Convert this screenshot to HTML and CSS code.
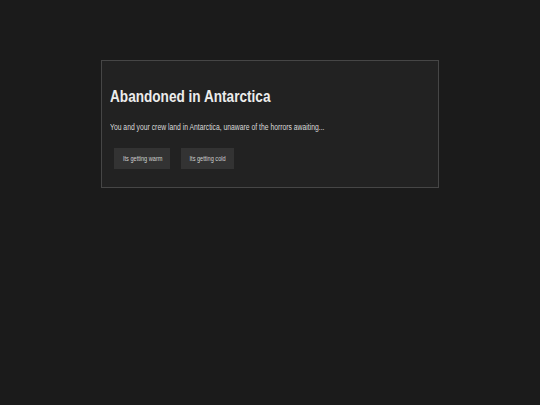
FILE: index.html
```html
<!DOCTYPE html>
<html>
<head>
<meta charset="utf-8">
<link rel="stylesheet" href="styles.css">
</head>
<body>
<div class="card">
  <h1 class="title"><span class="narrow">Abandoned in Antarctica</span></h1>
  <p class="text"><span class="narrow">You and your crew land in Antarctica, unaware of the horrors awaiting...</span></p>
  <div class="choices">
    <button class="choice"><span class="narrow-c">Its getting warm</span></button>
    <button class="choice"><span class="narrow-c">Its getting cold</span></button>
  </div>
</div>
</body>
</html>
```
FILE: styles.css
```css
html, body {
  margin: 0;
  padding: 0;
  background: #1b1b1b;
  height: 100%;
}
body {
  font-family: "Liberation Sans", Arial, sans-serif;
  color: #e6e6e6;
}
.narrow {
  display: inline-block;
  white-space: nowrap;
  transform: scaleX(0.8);
  transform-origin: left center;
}
.narrow-c {
  display: inline-block;
  white-space: nowrap;
  transform: scaleX(0.8);
  transform-origin: center center;
}
.card {
  box-sizing: border-box;
  width: 338px;
  height: 128px;
  margin: 60px auto 0;
  border: 1px solid #464646;
  background: #222222;
  padding: 26px 8px 0;
}
.title {
  margin: 0;
  font-size: 17px;
  line-height: 20px;
  font-weight: bold;
  color: #ececec;
}
.text {
  margin: 15px 0 0;
  font-size: 8.5px;
  line-height: 10px;
  color: #dadada;
}
.choices {
  display: flex;
  gap: 11px;
  margin: 16px 0 0 4px;
}
.choice {
  background: #333333;
  border: none;
  color: #cfcfcf;
  font-family: inherit;
  font-size: 7px;
  line-height: 8px;
  height: 21px;
  padding: 0 3.5px;
}
```
